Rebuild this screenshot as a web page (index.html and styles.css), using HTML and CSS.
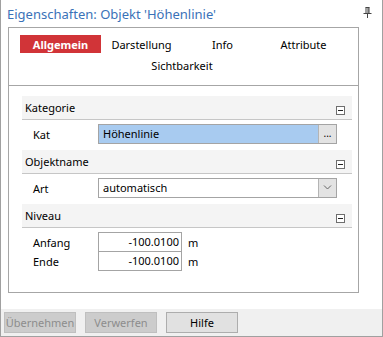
FILE: index.html
```html
<!DOCTYPE html>
<html lang="de">

<head>
    <meta charset="UTF-8">
    <title>Eigenschaften</title>
    <link rel="stylesheet" href="styles.css">
</head>

<body>
    <div class="window">
        <header class="titlebar">
            <span class="title">Eigenschaften: Objekt 'Höhenlinie'</span>
            <svg class="pin" width="9" height="11" viewBox="0 0 9 11">
                <path d="M2.5 0.5h4M3 0.5v6M6 0.5v6M5 0.5v6M0.5 6.5h8M4.5 6.5v4.5" stroke="#444" stroke-width="1" fill="none" />
            </svg>
        </header>

        <div class="panel">
            <nav class="tabs">
                <a href="#" class="tab active">Allgemein</a>
                <a href="#" class="tab">Darstellung</a>
                <a href="#" class="tab">Info</a>
                <a href="#" class="tab">Attribute</a>
                <a href="#" class="tab">Sichtbarkeit</a>
            </nav>

            <div class="grid">
                <div class="section">
                    <span>Kategorie</span>
                    <span class="collapse"></span>
                </div>
                <div class="row">
                    <span class="label">Kat</span>
                    <div class="field selected">
                        <span class="value">Höhenlinie</span>
                        <span class="field-btn">...</span>
                    </div>
                </div>

                <div class="section">
                    <span>Objektname</span>
                    <span class="collapse"></span>
                </div>
                <div class="row">
                    <span class="label">Art</span>
                    <div class="field">
                        <span class="value">automatisch</span>
                        <span class="field-btn">
                            <svg width="9" height="6" viewBox="0 0 9 6">
                                <path d="M1 1.5l3.5 3.5l3.5-3.5" stroke="#666" stroke-width="1" fill="none" />
                            </svg>
                        </span>
                    </div>
                </div>

                <div class="section">
                    <span>Niveau</span>
                    <span class="collapse"></span>
                </div>
                <div class="level">
                    <div class="level-row">
                        <span class="label">Anfang</span>
                        <span class="number">-100.0100</span>
                        <span class="unit">m</span>
                    </div>
                    <div class="level-row">
                        <span class="label">Ende</span>
                        <span class="number">-100.0100</span>
                        <span class="unit">m</span>
                    </div>
                </div>
            </div>
        </div>

        <footer class="buttons">
            <button class="btn" disabled>Übernehmen</button>
            <button class="btn" disabled>Verwerfen</button>
            <button class="btn">Hilfe</button>
        </footer>
    </div>
</body>

</html>
```

FILE: styles.css
```css
* {
    margin: 0;
    padding: 0;
    box-sizing: border-box;
    font-family: 'Noto Sans', 'DejaVu Sans', sans-serif;
}

body {
    background-color: white;
}

.window {
    width: 383px;
    height: 337px;
    border: 1px solid #a0a0a0;
    border-top: none;
    display: flex;
    flex-direction: column;
    background-color: white;
}

.titlebar {
    height: 27px;
    display: flex;
    justify-content: space-between;
    align-items: center;
    padding: 0 10px 0 6px;
}

.title {
    color: #3a72b8;
    font-size: 13px;
}

.pin {
    margin-bottom: 3px;
}

.panel {
    height: 266px;
    margin: 0 23px 0 7px;
    border: 1px solid #a6a6a6;
}

.tabs {
    display: flex;
    flex-wrap: wrap;
    justify-content: center;
    row-gap: 3px;
    width: 324px;
    margin-left: 11px;
    padding: 7px 0 11px;
}

.tab {
    width: 81px;
    height: 18px;
    display: flex;
    align-items: center;
    justify-content: center;
    font-size: 11px;
    color: black;
    text-decoration: none;
}

.tab.active {
    background-color: #d13438;
    color: white;
    font-weight: 700;
}

.grid {
    border-top: 1px solid #a6a6a6;
    padding: 10px 6px 0 13px;
}

.section {
    height: 24px;
    display: flex;
    justify-content: space-between;
    align-items: flex-end;
    padding: 0 7px 3px 3px;
    background-color: #f4f4f4;
    border-bottom: 1px solid #c6c6c6;
    font-size: 11px;
}

.section span:first-child {
    align-self: center;
    padding-top: 2px;
}

.collapse {
    width: 9px;
    height: 9px;
    border: 1px solid #6e6e6e;
    background-color: white;
    position: relative;
    margin-bottom: 1px;
}

.collapse::after {
    content: '';
    position: absolute;
    left: 1px;
    right: 1px;
    top: 3px;
    height: 1px;
    background-color: #222;
}

.row {
    display: flex;
    align-items: center;
    padding: 4px 15px 6px 11px;
}

.label {
    width: 65px;
    font-size: 11px;
}

.field {
    flex: 1;
    height: 20px;
    display: flex;
    border: 1px solid #a4a4a4;
    background-color: white;
}

.field.selected {
    background-color: #a8cbf0;
}

.value {
    flex: 1;
    padding-left: 4px;
    font-size: 11px;
    line-height: 18px;
}

.field-btn {
    width: 18px;
    border-left: 1px solid #b4b4b4;
    background-color: #e3e3e3;
    display: flex;
    align-items: center;
    justify-content: center;
    font-size: 10px;
    padding-bottom: 2px;
}

.level {
    padding: 4px 0 0 11px;
}

.level-row {
    display: flex;
    align-items: center;
}

.number {
    width: 84px;
    height: 20px;
    border: 1px solid #a4a4a4;
    text-align: right;
    padding-right: 2px;
    font-size: 11px;
    line-height: 18px;
}

.level-row + .level-row .number {
    border-top: none;
    height: 19px;
}

.unit {
    margin-left: 6px;
    font-size: 11px;
}

.buttons {
    margin-top: auto;
    height: 27px;
    background-color: #f0f0f0;
    display: flex;
    align-items: center;
    gap: 9px;
    padding: 0 0 0 3px;
}

.btn {
    width: 72px;
    height: 21px;
    border: 1px solid #adadad;
    background-color: #e1e1e1;
    font-size: 11px;
    color: black;
}

.btn:disabled {
    background-color: #cccccc;
    border-color: #bfbfbf;
    color: #8d8d8d;
}
```
